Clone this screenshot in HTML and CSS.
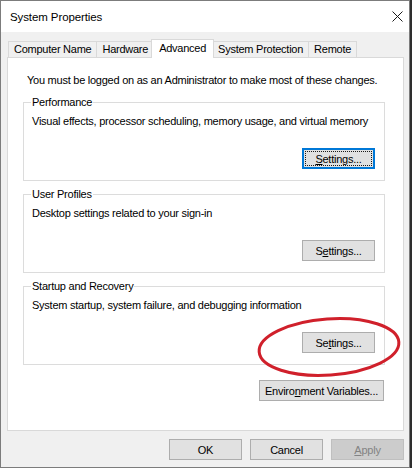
FILE: index.html
```html
<!DOCTYPE html>
<html lang="en">
<head>
<meta charset="utf-8">
<title>System Properties</title>
<link rel="stylesheet" href="styles.css">
</head>
<body>
<div class="window">
  <div class="titlebar">
    <span class="title">System Properties</span>
    <svg class="close" width="11" height="11" viewBox="0 0 11 11"><path d="M0.5 0.5 L10.5 10.5 M10.5 0.5 L0.5 10.5" stroke="#1a1a1a" stroke-width="1" fill="none"/></svg>
  </div>
  <div class="content">
    <div class="tabs">
      <div class="tab">Computer Name</div>
      <div class="tab">Hardware</div>
      <div class="tab active">Advanced</div>
      <div class="tab">System Protection</div>
      <div class="tab">Remote</div>
    </div>
    <div class="panel">
      <p class="note">You must be logged on as an Administrator to make most of these changes.</p>
      <fieldset class="group">
        <legend>Performance</legend>
        <p class="desc">Visual effects, processor scheduling, memory usage, and virtual memory</p>
        <div class="actions"><button class="btn default"><span class="focus"><u>S</u>ettings...</span></button></div>
      </fieldset>
      <fieldset class="group">
        <legend>User Profiles</legend>
        <p class="desc">Desktop settings related to your sign-in</p>
        <div class="actions"><button class="btn">S<u>e</u>ttings...</button></div>
      </fieldset>
      <fieldset class="group">
        <legend>Startup and Recovery</legend>
        <p class="desc">System startup, system failure, and debugging information</p>
        <div class="actions"><button class="btn">Se<u>t</u>tings...</button></div>
      </fieldset>
      <div class="env-row"><button class="btn wide">Enviro<u>n</u>ment Variables...</button></div>
    </div>
    <div class="footer">
      <button class="btn">OK</button>
      <button class="btn">Cancel</button>
      <button class="btn disabled"><u>A</u>pply</button>
    </div>
  </div>
  <svg class="mark" width="412" height="468" viewBox="0 0 412 468"><ellipse cx="329" cy="347" rx="70" ry="28" transform="rotate(-4 329 347)" fill="none" stroke="#d0202b" stroke-width="3"/></svg>
</div>
</body>
</html>
```
FILE: styles.css
```css
html, body {
  margin: 0;
  padding: 0;
  background: #2e2e2e;
}
body {
  font-family: "Liberation Sans", Arial, sans-serif;
  font-size: 11px;
  letter-spacing: -0.25px;
  color: #000;
}
.window {
  position: relative;
  width: 410px;
  height: 468px;
  box-sizing: border-box;
  border: 1px solid #7c7c7c;
  background: #f0f0f0;
  display: flex;
  flex-direction: column;
}
.titlebar {
  height: 31px;
  flex: none;
  background: #fff;
  display: flex;
  align-items: center;
  justify-content: space-between;
  padding: 0 6px 0 9px;
}
.title {
  font-size: 11.5px;
  letter-spacing: -0.1px;
}
.close {
  display: block;
}
.content {
  flex: 1;
  display: flex;
  flex-direction: column;
  padding: 7px 5px 0 6px;
}
.tabs {
  display: flex;
  align-items: flex-end;
  padding-left: 1px;
}
.tab {
  height: 15px;
  line-height: 15px;
  padding: 0 5px;
  border: 1px solid #d9d9d9;
  border-bottom: none;
  margin-left: -1px;
  background: #f0f0f0;
  white-space: nowrap;
}
.tab:first-child {
  margin-left: 0;
}
.tab.active {
  position: relative;
  z-index: 1;
  height: 17px;
  padding: 1px 7px 0;
  margin: 0 -2px -1px -3px;
  background: #fff;
}
.tab.active + .tab {
  margin-left: 0;
}
.panel {
  flex: 1;
  background: #fff;
  border: 1px solid #d9d9d9;
  padding: 15px 0 0;
  display: flex;
  flex-direction: column;
}
.note {
  margin: 0 0 0 19px;
  line-height: 15px;
}
.group {
  margin: 7px 18px 0 15px;
  padding: 4px 9px 11px 8px;
  border: 1px solid #dcdcdc;
  min-inline-size: 0;
}
.group + .group {
  margin-top: 6px;
}
.group legend {
  padding: 0 1px;
  margin-left: -1px;
  line-height: 15px;
}
.desc {
  margin: 0;
  line-height: 15px;
}
.actions {
  display: flex;
  justify-content: flex-end;
  margin-top: 19px;
}
.btn {
  width: 73px;
  height: 21px;
  box-sizing: border-box;
  padding: 0;
  border: 1px solid #adadad;
  background: #e1e1e1;
  font: inherit;
  letter-spacing: inherit;
  color: #000;
  display: flex;
  align-items: center;
  justify-content: center;
}
.btn.default {
  border-color: #0078d7;
  box-shadow: inset 0 0 0 1px #0078d7;
  align-items: stretch;
}
.btn .focus {
  flex: 1;
  margin: 2px;
  border: 1px dotted #1a1a1a;
  display: flex;
  align-items: center;
  justify-content: center;
}
.btn.wide {
  width: 125px;
}
.btn.disabled {
  background: #cccccc;
  border-color: #bfbfbf;
  color: #838383;
}
.env-row {
  display: flex;
  justify-content: flex-end;
  margin: 15px 19px 0 0;
}
.footer {
  flex: none;
  height: 36px;
  box-sizing: border-box;
  padding-top: 8px;
  display: flex;
  justify-content: flex-end;
  gap: 8px;
}
.mark {
  position: absolute;
  left: -1px;
  top: -1px;
  pointer-events: none;
}
```
